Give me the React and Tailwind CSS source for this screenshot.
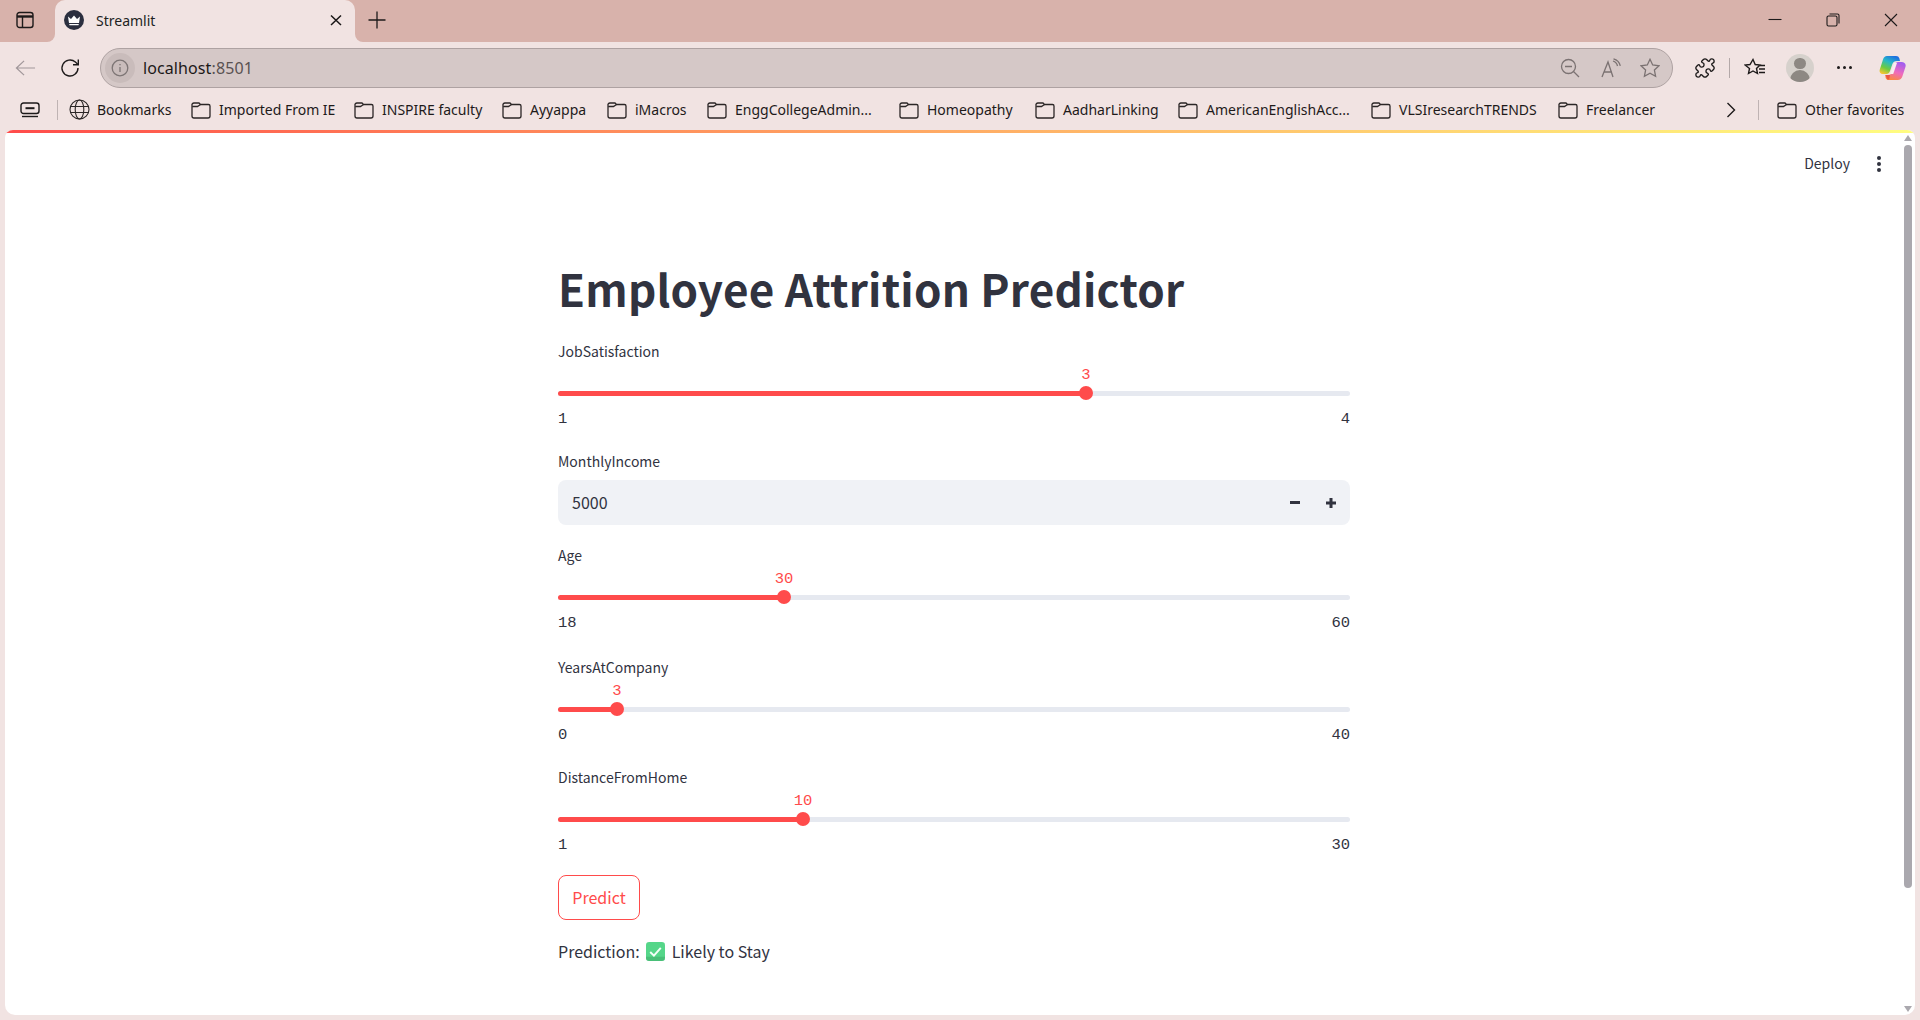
import React from "react";
import { Puzzle } from "lucide-react";

const ui = "font-['Noto_Sans','Open_Sans',sans-serif]";
const st = "font-['Noto_Sans_CJK_JP','Noto_Sans',sans-serif]";
const mono = "font-['Liberation_Mono','DejaVu_Sans_Mono',monospace]";

function Folder() {
  return (
    <svg width="20" height="18" viewBox="0 0 20 18" fill="none" stroke="#2b2626" strokeWidth="1.3" className="shrink-0">
      <path d="M1 4.500V15a2 2 0 0 0 2 2h14a2 2 0 0 0 2-2V5a1.500 1.500 0 0 0-1.500-1.500H9.500L8 2H3a2 2 0 0 0-2 2.500Z" />
      <path d="M1.200 5.500H6.500L9.500 3.500" />
    </svg>
  );
}

function Bookmark({ label, w }) {
  return (
    <div className="flex items-center gap-[8px]">
      <Folder />
      <span className={`${w} whitespace-nowrap overflow-visible`}>{label}</span>
    </div>
  );
}

function TabBar() {
  return (
    <div className="h-[42px] shrink-0 bg-[#f1e3e2] flex items-stretch">
      <div className="w-[55px] bg-[#d8b2ab] rounded-br-[8px] flex items-center justify-center pr-[5px] pb-[2px]">
        <svg width="18" height="18" viewBox="0 0 18 18" fill="none" stroke="#1d1a1a" strokeWidth="1.4">
          <rect x="1" y="1.500" width="16" height="15" rx="2.500" />
          <path d="M1 5.500H17" strokeWidth="2.400" />
          <path d="M6.500 5.500V16.500" />
        </svg>
      </div>
      <div className="w-[300px] bg-[#d8b2ab]">
        <div className="h-full bg-[#f1e3e2] rounded-t-[10px] flex items-center pl-[9px] pr-[13px] pb-[2px]">
          <svg width="20" height="20" viewBox="0 0 20 20" className="shrink-0">
            <circle cx="10" cy="10" r="10" fill="#2b2f3f" />
            <path d="M4 6.500 7 9l3-3.600L13 9l3-2.500-1 6.500H5Z" fill="#fff" />
            <path d="M5.200 14h9.600l-.3 1.200H5.500Z" fill="#fff" />
          </svg>
          <span className={`${ui} ml-[12px] text-[14px] text-[#221f1f] flex-1`}>Streamlit</span>
          <svg width="12" height="12" viewBox="0 0 12 12" stroke="#1a1717" strokeWidth="1.500">
            <path d="M1 1.500 11 11M11 1.500 1 11" />
          </svg>
        </div>
      </div>
      <div className="flex-1 bg-[#d8b2ab] rounded-bl-[8px] flex items-stretch pb-[2px]">
        <div className="w-[44px] flex items-center justify-center">
          <svg width="18" height="18" viewBox="0 0 18 18" stroke="#1d1a1a" strokeWidth="1.300">
            <path d="M9 0.500V17.500M0.500 9H17.500" />
          </svg>
        </div>
        <div className="flex-1" />
        <div className="flex items-center pr-[22px] gap-[44px]">
          <svg width="14" height="14" viewBox="0 0 14 14" stroke="#1d1a1a" strokeWidth="1.100"><path d="M0.500 6.500H13.500" /></svg>
          <svg width="14" height="14" viewBox="0 0 14 14" fill="none" stroke="#1d1a1a" strokeWidth="1.100">
            <rect x="1" y="3" width="10" height="10" rx="1.500" />
            <path d="M3.500 1H11.500a1.500 1.500 0 0 1 1.500 1.500V10.500" />
          </svg>
          <svg width="14" height="14" viewBox="0 0 14 14" stroke="#1d1a1a" strokeWidth="1.100"><path d="M1 1 13 13M13 1 1 13" /></svg>
        </div>
      </div>
    </div>
  );
}

function Toolbar() {
  return (
    <div className="h-[45px] shrink-0 flex items-center">
      <div className="w-[100px] pl-[15px] mt-[6px] flex items-center gap-[24px]">
        <svg width="21" height="18" viewBox="0 0 22 18" fill="none" stroke="#a1979a" strokeWidth="1.300">
          <path d="M21 9H1.500M9.500 1.500 1.500 9l8 7.500" />
        </svg>
        <svg width="20" height="20" viewBox="0 0 20 20" fill="none" stroke="#1d1a1a" strokeWidth="1.400">
          <path d="M18 10a8 8 0 1 1-2.600-5.900L18 6.500" />
          <path d="M18.300 1.500V6.800H13" />
        </svg>
      </div>
      <div className="w-[1573px] h-[40px] mt-[6px] bg-[#d5c8c7] border border-[#aea2a2] rounded-full flex items-center pl-[4px] pr-[12px]">
        <div className="w-[30px] h-[30px] rounded-full bg-[#c9bcbb] flex items-center justify-center">
          <svg width="18" height="18" viewBox="0 0 18 18" fill="none" stroke="#7d7575" strokeWidth="1.300">
            <circle cx="9" cy="9" r="7.800" />
            <path d="M9 8V13M9 5V6.200" />
          </svg>
        </div>
        <span className={`${ui} ml-[8px] text-[16px] tracking-[0.1px] text-[#1c1818] flex-1`}>
          localhost<span className="text-[#5a5252]">:8501</span>
        </span>
        <div className="flex items-center">
          <svg width="20" height="20" viewBox="0 0 20 20" fill="none" stroke="#7b7272" strokeWidth="1.300">
            <circle cx="8.500" cy="8.500" r="7" />
            <path d="M5 8.500H12M13.500 13.500 19 19" />
          </svg>
          <svg width="20" height="20" viewBox="0 0 20 20" fill="none" stroke="#7b7272" strokeWidth="1.300" className="ml-[21px]">
            <path d="M1 19 7 4l5 15M3 14h8M12 3c2.500.8 4 2.500 4.500 5M12.500.8c3.500 1 6 3.500 6.800 7" />
          </svg>
          <svg width="20" height="20" viewBox="0 0 20 20" fill="none" stroke="#7b7272" strokeWidth="1.300" className="ml-[19px]">
            <path d="M10 1.300 12.700 7l6.300.8-4.600 4.300 1.200 6.200L10 15.200l-5.600 3.100 1.200-6.200L1 7.800 7.300 7Z" />
          </svg>
        </div>
      </div>
      <div className="flex-1 flex items-center pl-[21px] mt-[6px]">
        <Puzzle size={22} strokeWidth={1.5} color="#1d1a1a" className="shrink-0" />
        <div className="w-px h-[20px] bg-[#b3a8a8] ml-[13px]" />
        <svg width="22" height="20" viewBox="0 0 22 20" fill="none" stroke="#1d1a1a" strokeWidth="1.400" className="ml-[14px]">
          <path d="M9 1.500 11.200 6.500 16 7l-3.500 3.500 1 5L9 13l-4.500 2.500 1-5L1 7l5-.5ZM15 7.500h6M15 11h6M15 14.500h6" />
        </svg>
        <div className="ml-[20px] w-[28px] h-[28px] rounded-full bg-[#d6d1cc] overflow-hidden flex flex-col items-center">
          <div className="w-[12px] h-[12px] rounded-full bg-[#8d8883] mt-[4px]" />
          <div className="w-[20px] h-[12px] rounded-t-full bg-[#8d8883] mt-[1px]" />
        </div>
        <div className="ml-[23px] flex gap-[3px]">
          <div className="w-[3px] h-[3px] rounded-full bg-[#1d1a1a]" />
          <div className="w-[3px] h-[3px] rounded-full bg-[#1d1a1a]" />
          <div className="w-[3px] h-[3px] rounded-full bg-[#1d1a1a]" />
        </div>
        <svg width="27" height="26" viewBox="0 0 27 26" className="ml-[27px] shrink-0">
          <defs>
            <linearGradient id="cpA" x1="0.700" y1="0" x2="0.200" y2="1">
              <stop offset="0" stopColor="#1f6fe0" />
              <stop offset="0.350" stopColor="#25b8c8" />
              <stop offset="0.700" stopColor="#6ccb3f" />
              <stop offset="1" stopColor="#f6c531" />
            </linearGradient>
            <linearGradient id="cpB" x1="0.700" y1="0" x2="0.300" y2="1">
              <stop offset="0" stopColor="#a05df0" />
              <stop offset="0.550" stopColor="#ef6bbd" />
              <stop offset="1" stopColor="#fb8a3c" />
            </linearGradient>
          </defs>
          <path d="M8 1h9c1.800 0 2.800.8 3.400 2.500L21 6h-3c-2.500 0-4 1-4.800 3.500L11 16c-.7 2-1.800 3-3.500 3H4c-2.500 0-4-2-3.200-4.500L4 4.500C4.700 2.300 6 1 8 1Z" fill="url(#cpA)" />
          <path d="M19 7h3.500c2.800 0 4.800 2 4 4.800l-3 9.200c-.8 2.700-2.300 4-4.700 4H10c-1.800 0-2.900-.8-3.400-2.300L6.200 20H9c2.500 0 4-1.500 4.800-3.500L16 10c.6-2 1.500-3 3-3Z" fill="url(#cpB)" />
          <path d="M15 8h3l-3.800 11h-3Z" fill="#f8eef0" />
          <path d="M6.500 20H11l-.8 4.500H8.500Z" fill="#e8483f" opacity="0.800" />
        </svg>
      </div>
    </div>
  );
}

function Bookmarks() {
  return (
    <div className={`${ui} h-[43px] pt-[2px] shrink-0 flex items-center text-[14px] text-[#1e1a1a]`}>
      <div className="w-[57px] flex items-center pl-[20px]">
        <svg width="20" height="16" viewBox="0 0 20 16" fill="none" stroke="#1d1a1a" strokeWidth="1.400">
          <rect x="1" y="1" width="18" height="10.500" rx="2.500" />
          <path d="M5.500 6.200H14.500" strokeWidth="2" />
          <path d="M2 14.500H18" />
        </svg>
      </div>
      <div className="w-px h-[20px] bg-[#bfb3b3]" />
      <div className="ml-[11px] flex items-center gap-[7px] w-[122px]">
        <svg width="21" height="21" viewBox="0 0 21 21" fill="none" stroke="#2b2626" strokeWidth="1.100" className="shrink-0">
          <circle cx="10.500" cy="10.500" r="9.500" />
          <ellipse cx="10.500" cy="10.500" rx="4.300" ry="9.500" />
          <path d="M1.500 7.500H19.500M1.500 13.500H19.500" />
        </svg>
        <span>Bookmarks</span>
      </div>
      <div className="flex items-center gap-[19px]">
        <Bookmark label="Imported From IE" w="w-[116px]" />
        <Bookmark label="INSPIRE faculty" w="w-[101px]" />
        <Bookmark label="Ayyappa" w="w-[58px]" />
        <Bookmark label="iMacros" w="w-[53px]" />
        <Bookmark label="EnggCollegeAdmin..." w="w-[145px]" />
        <Bookmark label="Homeopathy" w="w-[89px]" />
        <Bookmark label="AadharLinking" w="w-[96px]" />
        <Bookmark label="AmericanEnglishAcc..." w="w-[146px]" />
        <Bookmark label="VLSIresearchTRENDS" w="w-[140px]" />
        <Bookmark label="Freelancer" w="w-[68px]" />
      </div>
      <div className="flex-1" />
      <svg width="10" height="16" viewBox="0 0 10 16" fill="none" stroke="#1d1a1a" strokeWidth="1.400">
        <path d="M1.500 1 8.500 8l-7 7" />
      </svg>
      <div className="w-px h-[20px] bg-[#bfb3b3] ml-[22px]" />
      <div className="ml-[18px] mr-[17px]">
        <Bookmark label="Other favorites" w="w-[98px]" />
      </div>
    </div>
  );
}

function Slider({ label, value, min, max, left, mt }) {
  return (
    <div className={mt}>
      <div className={`${st} h-[20px] text-[14px] leading-[20px] text-[#31333f]`}>{label}</div>
      <div className="relative h-[14px] mt-[25px]">
        <div className="absolute inset-x-0 top-[5px] h-[5px] rounded-full bg-[#e6e9f0]" />
        <div className="absolute left-0 top-[5px] h-[5px] rounded-full bg-[#ff4b4b]" style={{ width: left }} />
        <div className="absolute top-0 w-[14px] h-[14px] rounded-full bg-[#ff4b4b] -translate-x-1/2" style={{ left }} />
        <div
          className={`${mono} absolute top-[-21px] text-[15.5px] leading-[20px] text-[#ff4b4b] -translate-x-1/2`}
          style={{ left }}
        >
          {value}
        </div>
      </div>
      <div className={`${mono} mt-[9px] flex justify-between text-[15.5px] leading-[20px] text-[#31333f]`}>
        <span>{min}</span>
        <span>{max}</span>
      </div>
    </div>
  );
}

function Content() {
  return (
    <div className="flex-1 mx-[5px] mb-[5px] bg-white rounded-b-[10px] rounded-t-[8px] overflow-hidden relative flex flex-col min-h-0">
      <div className="h-[3px] shrink-0 bg-gradient-to-r from-[#ff4b4b] to-[#fffd80]" />
      <div className="absolute top-[23px] right-[34px] flex items-center gap-[27px]">
        <span className={`${st} text-[14px] text-[#31333f]`}>Deploy</span>
        <svg width="4" height="16" viewBox="0 0 4 16" fill="#31333f">
          <circle cx="2" cy="2" r="2" />
          <circle cx="2" cy="8" r="2" />
          <circle cx="2" cy="14" r="2" />
        </svg>
      </div>
      <div className="absolute top-[3px] bottom-0 right-[3px] w-[8px] flex flex-col items-center">
        <div className="w-0 h-0 mt-[2px] border-x-[4px] border-x-transparent border-b-[6px] border-b-[#aaa8ae]" />
        <div className="w-[8px] h-[743px] mt-[4px] rounded-full bg-[#aaa8ae]" />
        <div className="flex-1" />
        <div className="w-0 h-0 mb-[3px] border-x-[4px] border-x-transparent border-t-[6px] border-t-[#aaa8ae]" />
      </div>
      <div className="w-[792px] ml-[553px] flex flex-col">
        <h1 className={`${st} mt-[122px] h-[66px] text-[44px] leading-[66px] font-bold text-[#31333f] tracking-[0.2px]`}>
          Employee Attrition Predictor
        </h1>
        <Slider label="JobSatisfaction" value="3" min="1" max="4" left="528px" mt="mt-[20px]" />
        <div className="mt-[22px]">
          <div className={`${st} h-[20px] text-[14px] leading-[20px] text-[#31333f]`}>MonthlyIncome</div>
          <div className="mt-[9px] h-[45px] bg-[#f0f2f6] rounded-[8px] flex items-center pl-[14px] pr-[14px]">
            <span className={`${st} flex-1 text-[16px] text-[#31333f] pb-[2px]`}>5000</span>
            <div className="w-[10px] h-[3px] bg-[#31333f]" />
            <svg width="10" height="10" viewBox="0 0 10 10" fill="#31333f" className="ml-[26px]">
              <path d="M3.500 0h3v3.500H10v3H6.500V10h-3V6.500H0v-3h3.500Z" />
            </svg>
          </div>
        </div>
        <Slider label="Age" value="30" min="18" max="60" left="226px" mt="mt-[20px]" />
        <Slider label="YearsAtCompany" value="3" min="0" max="40" left="59px" mt="mt-[24px]" />
        <Slider label="DistanceFromHome" value="10" min="1" max="30" left="245px" mt="mt-[22px]" />
        <button className={`${st} mt-[20px] w-[82px] h-[45px] pb-[2px] rounded-[8px] border border-[#ff4b4b] text-[16px] text-[#ff4b4b] bg-white`}>
          Predict
        </button>
        <div className={`${st} mt-[19px] flex items-center text-[16px] text-[#31333f] h-[24px]`}>
          <span>Prediction:</span>
          <svg width="19" height="19" viewBox="0 0 18 18" className="ml-[6px]">
            <rect x="0" y="0" width="18" height="18" rx="3" fill="#55d689" />
            <path d="M0 15a3 3 0 0 0 3 3h12a3 3 0 0 0 3-3v-1H0Z" fill="#3ea868" opacity="0.500" />
            <path d="M4 9.500 7.500 13 14 5.500" fill="none" stroke="#f4fff8" strokeWidth="1.800" />
          </svg>
          <span className="ml-[7px]">Likely to Stay</span>
        </div>
      </div>
    </div>
  );
}

export default function App() {
  return (
    <div className="h-screen w-full bg-[#f1e3e2] flex flex-col overflow-hidden">
      <TabBar />
      <Toolbar />
      <Bookmarks />
      <Content />
    </div>
  );
}
